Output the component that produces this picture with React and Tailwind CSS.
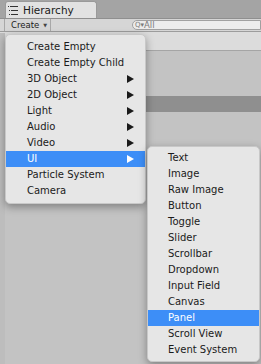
import React from "react";

const main = [
  ["Create Empty", false],
  ["Create Empty Child", false],
  ["3D Object", true],
  ["2D Object", true],
  ["Light", true],
  ["Audio", true],
  ["Video", true],
  ["UI", true, true],
  ["Particle System", false],
  ["Camera", false],
];
const sub = ["Text","Image","Raw Image","Button","Toggle","Slider","Scrollbar","Dropdown","Input Field","Canvas","Panel","Scroll View","Event System"];

function Arrow({ white }) {
  return (
    <svg width="7" height="8" viewBox="0 0 7 8" className="absolute left-[121px] top-[4px]">
      <path d="M0 0 L7 4 L0 8 Z" fill={white ? "#ffffff" : "#1a1a1a"} />
    </svg>
  );
}

export default function App() {
  return (
    <div className="relative w-[261px] h-[364px] overflow-hidden bg-[#c3c3c3] text-[#1a1a1a]" style={{ fontFamily: '"DejaVu Sans", Verdana, sans-serif' }}>
      <div className="h-[19px] bg-[#a4a4a4] flex items-end pl-[5px] border-b border-[#8f8f8f]">
        <div className="w-[92px] h-[17px] bg-[#e2e2e2] rounded-t-[3px] flex items-center gap-[5px] pl-[2px] border border-b-0 border-[#9a9a9a]">
          <svg width="10" height="9" viewBox="0 0 10 9">
            <rect x="0" y="0" width="1" height="1" fill="#333" />
            <rect x="2" y="0" width="8" height="1" fill="#333" />
            <rect x="1" y="4" width="1" height="1" fill="#333" />
            <rect x="3" y="4" width="7" height="1" fill="#333" />
            <rect x="1" y="8" width="1" height="1" fill="#333" />
            <rect x="3" y="8" width="7" height="1" fill="#333" />
          </svg>
          <span className="text-[10.5px] leading-none">Hierarchy</span>
        </div>
      </div>
      <div className="h-[13px] bg-[#d6d6d6] border-b border-[#9c9c9c] flex items-stretch">
        <div className="w-[5px] border-r border-[#a8a8a8]" />
        <div className="w-[46px] border-r border-[#a8a8a8] flex items-center pl-[6px] gap-[4px]">
          <span className="text-[8.5px] leading-none">Create</span>
          <span className="text-[5px] leading-none text-[#444]">▼</span>
        </div>
        <div className="flex-1" />
        <div className="w-[129px] my-[1px] bg-[#ececec] border border-[#a0a0a0] rounded-l-[6px] flex items-center pl-[2px] leading-none text-[#7a7a7a]">
          <span className="text-[7px]">Q▾</span><span className="text-[8.5px]">All</span>
        </div>
      </div>
      <div className="h-[19px] bg-[#dcdcdc] border-b border-[#a5a5a5]" />
      <div className="h-[45px]" />
      <div className="h-[16px] bg-[#8f8f8f]" />
      <div className="absolute left-0 top-[33px] w-[5px] h-[331px] bg-[#bdbdbd]" />

      <div className="absolute left-[5px] top-[34px] w-[141px] bg-[#e6e6e6] rounded-[5px] py-[4px] shadow-[0_3px_8px_rgba(0,0,0,0.35)] border border-[#c8c8c8]">
        {main.map(([label, arrow, hl]) => (
          <div key={label} className={"relative h-[16px] pl-[21px] text-[10px] leading-[16px] " + (hl ? "bg-[#3d8ef7] text-white" : "")}>
            {label}
            {arrow && <Arrow white={hl} />}
          </div>
        ))}
      </div>

      <div className="absolute left-[147px] top-[146px] w-[113px] bg-[#e6e6e6] rounded-[5px] py-[3px] shadow-[0_3px_8px_rgba(0,0,0,0.35)] border border-[#c8c8c8]">
        {sub.map((label) => (
          <div key={label} className={"h-[16px] pl-[20px] text-[10px] leading-[16px] " + (label === "Panel" ? "bg-[#3d8ef7] text-white" : "")}>
            {label}
          </div>
        ))}
      </div>
    </div>
  );
}
